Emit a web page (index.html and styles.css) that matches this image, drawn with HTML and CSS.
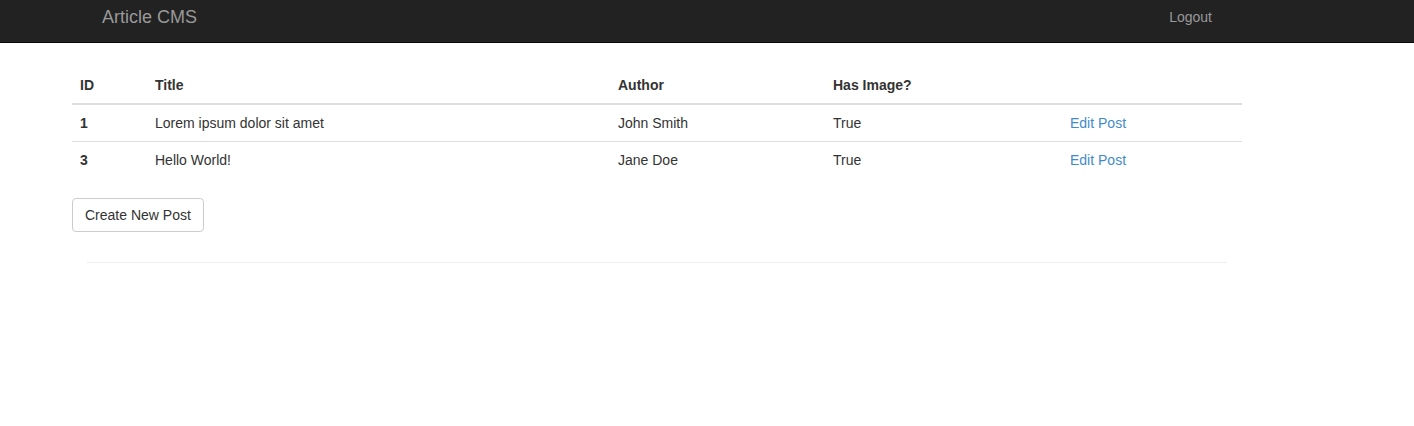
FILE: index.html
```html
<!DOCTYPE html>
<html>
<head>
<meta charset="utf-8">
<title>Article CMS</title>
<link rel="stylesheet" href="styles.css">
</head>
<body>
<nav class="navbar">
  <div class="nav-inner">
    <a class="brand" href="#">Article CMS</a>
    <a class="nav-link" href="#">Logout</a>
  </div>
</nav>
<main class="container">
  <table class="table">
    <colgroup>
      <col class="c-id"><col class="c-title"><col class="c-author"><col class="c-img"><col class="c-act">
    </colgroup>
    <thead>
      <tr><th>ID</th><th>Title</th><th>Author</th><th>Has Image?</th><th></th></tr>
    </thead>
    <tbody>
      <tr><td class="strong">1</td><td>Lorem ipsum dolor sit amet</td><td>John Smith</td><td>True</td><td><a href="#">Edit Post</a></td></tr>
      <tr><td class="strong">3</td><td>Hello World!</td><td>Jane Doe</td><td>True</td><td><a href="#">Edit Post</a></td></tr>
    </tbody>
  </table>
  <button class="btn">Create New Post</button>
  <hr class="rule">
</main>
</body>
</html>
```

FILE: styles.css
```css
* { box-sizing: border-box; }
html, body {
  margin: 0;
  padding: 0;
  background: #fff;
  font-family: "Liberation Sans", Arial, sans-serif;
  font-size: 14px;
  line-height: 20px;
  color: #333;
}
a { color: #428bca; text-decoration: none; }

.navbar {
  background: #222;
  border-bottom: 1px solid #080808;
  height: 43px;
}
.nav-inner {
  margin-left: 72px;
  width: 1170px;
  padding: 0 15px;
  display: flex;
  justify-content: space-between;
  align-items: flex-start;
}
.brand {
  color: #999;
  font-size: 18px;
  line-height: 20px;
  padding: 7px 15px;
}
.nav-link {
  color: #999;
  font-size: 14px;
  line-height: 20px;
  padding: 7px 15px;
}

.container {
  margin-left: 72px;
  width: 1170px;
  padding-top: 24px;
}
.table {
  width: 100%;
  border-collapse: collapse;
  border-spacing: 0;
  margin-bottom: 20px;
}
.c-id { width: 75px; }
.c-title { width: 463px; }
.c-author { width: 215px; }
.c-img { width: 237px; }
.c-act { width: 180px; }
.table th {
  text-align: left;
  font-weight: bold;
  padding: 8px;
  line-height: 20px;
  border-bottom: 2px solid #ddd;
  vertical-align: bottom;
}
.table td {
  padding: 8px;
  line-height: 20px;
  border-top: 1px solid #ddd;
  vertical-align: top;
}
.table td.strong { font-weight: bold; }

.btn {
  display: block;
  font-family: "Liberation Sans", Arial, sans-serif;
  font-size: 14px;
  line-height: 20px;
  color: #333;
  background: #fff;
  border: 1px solid #ccc;
  border-radius: 4px;
  padding: 6px 12px;
  margin: 0;
}
.rule {
  border: 0;
  border-top: 1px solid #eee;
  margin: 30px 15px 0;
  height: 0;
}
```
